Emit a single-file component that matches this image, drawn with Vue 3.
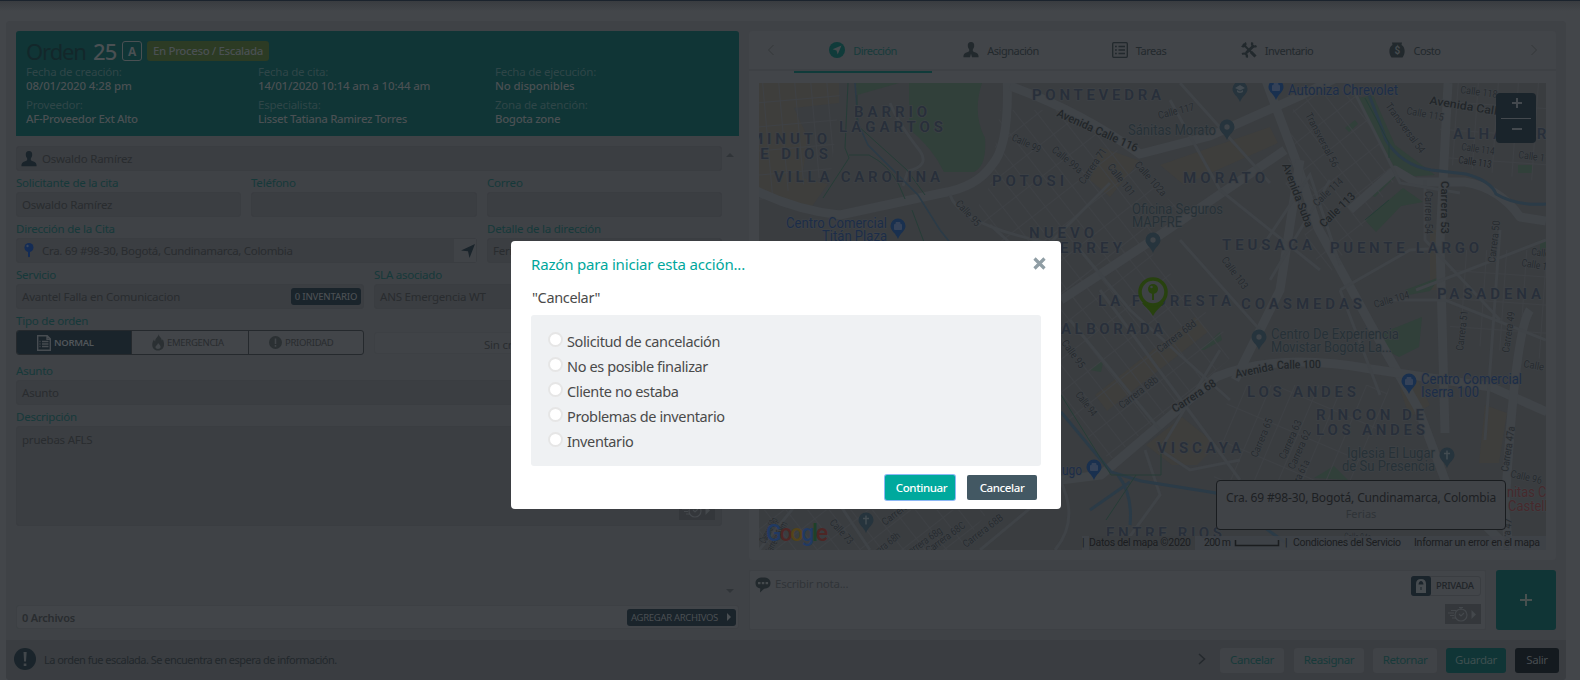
<script setup>
const columns = [
  [
    { label: 'Fecha de creación:', value: '08/01/2020 4:28 pm' },
    { label: 'Proveedor:', value: 'AF-Proveedor Ext Alto' },
  ],
  [
    { label: 'Fecha de cita:', value: '14/01/2020 10:14 am a 10:44 am' },
    { label: 'Especialista:', value: 'Lisset Tatiana Ramirez Torres' },
  ],
  [
    { label: 'Fecha de ejecución:', value: 'No disponibles' },
    { label: 'Zona de atención:', value: 'Bogota zone' },
  ],
]
const tabs = [
  { name: 'Dirección', icon: 'compass' },
  { name: 'Asignación', icon: 'user' },
  { name: 'Tareas', icon: 'list' },
  { name: 'Inventario', icon: 'tools' },
  { name: 'Costo', icon: 'cost' },
]
const reasons = [
  'Solicitud de cancelación',
  'No es posible finalizar',
  'Cliente no estaba',
  'Problemas de inventario',
  'Inventario',
]

// Neighbourhood names: text, start x, end x, baseline
const areas = [
  ['BARRIO', 854, 927, 117], ['LAGARTOS', 839, 943, 132], ['MINUTO', 750, 827, 144],
  ['DE DIOS', 746, 828, 159], ['VILLA CAROLINA', 774, 940, 182], ['PONTEVEDRA', 1032, 1161, 100],
  ['POTOSI', 992, 1064, 186], ['NUEVO', 1029, 1094, 238], ['MONTERREY', 1000, 1122, 253],
  ['LA FLORESTA', 1098, 1231, 306], ['MORATO', 1183, 1265, 183], ['TEUSACA', 1222, 1312, 250],
  ['PUENTE LARGO', 1330, 1479, 253], ['COASMEDAS', 1241, 1362, 309], ['PASADENA', 1437, 1541, 299],
  ['ALHAMBRA', 1453, 1560, 139], ['ALBORADA', 1061, 1163, 334], ['LOS ANDES', 1247, 1356, 397],
  ['RINCON DE', 1316, 1424, 420], ['LOS ANDES', 1316, 1425, 435], ['VISCAYA', 1157, 1241, 453],
  ['ENTRE RIOS', 1106, 1222, 538],
]
// Street names run between two points
const rawStreets = [
  ['Avenida Calle 116', 1056, 116, 1136, 152, 'big'], ['Calle 99', 1011, 140, 1039, 153],
  ['Calle 99a', 1051, 151, 1079, 174], ['Carrera 71', 1084, 185, 1107, 151],
  ['Calle 101', 1107, 167, 1130, 197], ['Calle 102a', 1134, 165, 1162, 197],
  ['Calle 95', 955, 204, 976, 227], ['Calle 117', 1159, 119, 1195, 110],
  ['Transversal 56', 1305, 115, 1333, 168], ['Avenida Suba', 1282, 165, 1306, 228, 'big'],
  ['Calle 114', 1317, 207, 1344, 182], ['Calle 113', 1324, 228, 1356, 197, 'big'],
  ['Calle 103', 1221, 260, 1243, 290], ['Calle 104', 1375, 308, 1410, 298],
  ['Calle 118', 1460, 93, 1497, 98], ['Avenida Calle 116', 1429, 104, 1527, 120, 'big'],
  ['Calle 115', 1406, 114, 1443, 121], ['Calle 114', 1461, 150, 1494, 155],
  ['Calle 113', 1458, 163, 1491, 168, 'dark'], ['Calle 116', 1518, 158, 1554, 163],
  ['Transversal 54', 1385, 106, 1420, 154], ['Carrera 53', 1441, 181, 1441, 234, 'big'],
  ['Carrera 54', 1425, 191, 1425, 234], ['Carrera 50', 1495, 263, 1500, 221],
  ['Calle 106', 1531, 255, 1565, 259], ['Calle 105', 1521, 266, 1556, 272],
  ['Carrera 68d', 1160, 353, 1197, 325], ['Calle 95', 1061, 343, 1080, 369],
  ['Avenida', 1236, 378, 1274, 370, 'big'], ['Calle 100', 1277, 369, 1321, 368, 'big'],
  ['Carrera 68', 1175, 413, 1217, 385, 'big'], ['Carrera 68b', 1122, 409, 1159, 381],
  ['Calle 94', 1075, 395, 1092, 417], ['Carrera 65', 1257, 458, 1273, 420],
  ['Carrera 63', 1285, 460, 1302, 422], ['Carrera 62', 1294, 470, 1311, 432],
  ['Carrera 61a', 1291, 500, 1310, 462], ['Carrera 51', 1463, 351, 1468, 311],
  ['Carrera 49', 1509, 353, 1515, 312], ['Calle 99', 1523, 367, 1556, 373],
  ['Carrera 47a', 1508, 472, 1515, 427], ['Calle 96', 1510, 477, 1541, 484],
  ['Carrera 47', 1508, 559, 1512, 519], ['Calle 73', 829, 523, 849, 545],
  ['Carrera 68', 885, 526, 919, 500], ['Carrera 68h', 868, 563, 901, 537],
  ['Carrera 68g', 907, 558, 943, 532], ['Carrera 68C', 929, 554, 966, 527],
  ['Carrera 68B', 966, 548, 1004, 519], ['Calle 94a', 1344, 540, 1371, 541],
  ['Carrera 69p', 765, 544, 778, 520], ['Carrera 69m', 770, 556, 788, 524],
]
const streets = rawStreets.map(([text, x1, y1, x2, y2, kind]) => ({
  text,
  kind,
  length: Math.hypot(x2 - x1, y2 - y1),
  transform: `translate(${x1} ${y1}) rotate(${(Math.atan2(y2 - y1, x2 - x1) * 180) / Math.PI})`,
}))
// Places: text, start x, end x, baseline, class
const places = [
  ['Centro Comercial', 786, 887, 228, 'shop'], ['Titán Plaza', 822, 887, 241, 'shop'],
  ['Sánitas Morato', 1128, 1216, 135, 'place'], ['Oficina Seguros', 1132, 1223, 214, 'place'],
  ['MAPFRE', 1132, 1182, 227, 'place'], ['Autoniza Chrevolet', 1288, 1398, 95, 'shop'],
  ['Centro De Experiencia', 1271, 1399, 339, 'place'], ['Movistar Bogotá La...', 1271, 1392, 352, 'place'],
  ['Centro Comercial', 1421, 1522, 384, 'shop'], ['Iserra 100', 1421, 1479, 397, 'shop'],
  ['Iglesia El Lugar', 1347, 1435, 458, 'place'], ['de Su Presencia', 1342, 1435, 471, 'place'],
  ['ugo', 1062, 1082, 475, 'shop'], ['nitas Colsa', 1507, 1570, 497, 'clinic'], ['Castellana', 1508, 1569, 511, 'clinic'],
]
const pins = [
  [898, 226, 'bag'], [1276, 87, 'bag'], [1409, 381, 'bag'], [1094, 467, 'bag'],
  [1227, 127, 'dot'], [1153, 240, 'dot'], [1259, 337, 'dot'], [1240, 89, 'cap'],
  [1447, 455, 'cross'], [866, 520, 'cross'],
]
</script>

<template>
  <div class="page">
    <main class="sheet">
      <div class="content">
        <section class="left">
          <header class="order">
            <div class="order-title">
              <span class="word">Orden</span><b class="number">25</b><span class="grade">A</span>
              <span class="status">En Proceso / Escalada</span>
            </div>
            <div class="facts">
              <div v-for="(col, i) in columns" :key="i">
                <p v-for="f in col" :key="f.label"><span>{{ f.label }}</span><b>{{ f.value }}</b></p>
              </div>
            </div>
          </header>

          <div class="form-wrap">
            <div class="form">
              <div class="field client">
                <svg width="16" height="16" viewBox="0 0 16 16"><path class="ink" d="M8 0c2.200 0 3.400 1.600 3.200 3.900-.1 1.700-.9 2.700-1.400 3.500v1.700c.6.900 3.200 1.500 4.500 2.400 1 .8 1.500 2.500 1.200 3.700H.5C.2 14 .7 12.300 1.700 11.500 3 10.600 5.600 10 6.200 9.100V7.400C5.700 6.600 4.900 5.600 4.800 3.900 4.600 1.600 5.800 0 8 0z" /></svg>
                <span>Oswaldo Ramírez</span>
              </div>
              <div class="row thirds">
                <div><label>Solicitante de la cita</label><div class="field">Oswaldo Ramírez</div></div>
                <div><label>Teléfono</label><div class="field"></div></div>
                <div><label>Correo</label><div class="field"></div></div>
              </div>
              <div class="row address">
                <div>
                  <label>Dirección de la Cita</label>
                  <div class="field pinned">
                    <svg width="10" height="15" viewBox="0 0 10 15"><circle cx="5" cy="4.500" r="4.500" fill="#142c55" /><path d="M4 8h2v5.500q-1 1.500-2 0z" fill="#142c55" /><circle cx="3.500" cy="3" r="1.200" fill="#36455c" /></svg>
                    <span>Cra. 69 #98-30, Bogotá, Cundinamarca, Colombia</span>
                    <i class="locate"><svg width="14" height="14" viewBox="0 0 14 14"><path class="ink" d="M14 0 8.500 14 7 7.300 0 6.500z" /></svg></i>
                  </div>
                </div>
                <div><label>Detalle de la dirección</label><div class="field">Ferias</div></div>
              </div>
              <div class="row halves">
                <div><label>Servicio</label><div class="field service"><span>Avantel Falla en Comunicacion</span><b>0 INVENTARIO</b></div></div>
                <div><label>SLA asociado</label><div class="field">ANS Emergencia WT</div></div>
              </div>
              <div class="row halves kind-row">
                <div>
                  <label>Tipo de orden</label>
                  <div class="kinds">
                    <div class="on">
                      <svg width="14" height="16" viewBox="0 0 14 16" fill="none" stroke="#474c51" stroke-width="1.400"><path d="M.7.7h9.500l3.100 3.200v11.400H.7zM10 .7v3.500h3.300M5 6.500h6.500M5 9h6.500M5 11.500h6.500M2.500 6.500h1M2.500 9h1M2.500 11.500h1" /></svg>NORMAL
                    </div>
                    <div>
                      <svg width="12" height="17" viewBox="0 0 12 17"><path class="gray" d="M6.500 0c.4 3 3.300 3.500 3.200 6.500 1-.3 1-1.200 1-1.600C13.500 10.500 12 16.500 6 16.500S-1.200 10 2 5.500c.2 1.300.7 1.700 1.200 1.900C3 3.500 6.500 3.500 6.500 0z" /><path d="M6 9c2 2 2.800 3 2.600 4.300-.3 2.200-4.900 2.200-5.200 0C3.200 12 5.500 11.500 6 9z" fill="#42464a" /></svg>EMERGENCIA
                    </div>
                    <div>
                      <svg width="13" height="13" viewBox="0 0 13 13"><circle class="gray" cx="6.500" cy="6.500" r="6.500" /><path d="M5.700 2.500h1.600V8H5.700zM5.700 9h1.600v1.700H5.700z" fill="#42464a" /></svg>PRIORIDAD
                    </div>
                  </div>
                </div>
                <div class="criteria">Sin criterios</div>
              </div>
              <div class="row subject"><div><label>Asunto</label><div class="field">Asunto</div></div></div>
              <div class="row">
                <div><label>Descripción</label><div class="field area">pruebas AFLS
                  <span class="timer"><svg width="30" height="16" viewBox="0 0 30 16" fill="none" stroke="#44484c" stroke-width="1.200"><circle cx="13" cy="9" r="6" /><path d="M11 1.500h4M13 2v2M11 8l2 2 3-3M3 4.500h5M0 7h6M2 9.500h4M4 12h4" /><path d="m23.500 4 4.500 4.500-4.500 4.500z" fill="#44484c" stroke="none" /></svg></span>
                </div></div>
              </div>
            </div>
            <div class="scroll"><i class="up"></i><i class="down"></i></div>
          </div>

          <div class="files"><b>0 Archivos</b><span>AGREGAR ARCHIVOS<i></i></span></div>
        </section>

        <section class="right">
          <div class="map-card">
            <nav class="tabs">
              <svg class="chev" width="8" height="12" viewBox="0 0 8 12"><path d="M6.500 1 1.500 6l5 5" /></svg>
              <div v-for="(t, i) in tabs" :key="t.name" class="tab" :class="{ active: i === 0 }">
                <svg width="16" height="16" viewBox="0 0 16 16">
                  <template v-if="t.icon === 'compass'"><circle cx="8" cy="8" r="8" fill="#103b3a" /><path d="m12.500 3.500-3.800 9-1.200-4-4-1.200z" fill="#444a4d" /></template>
                  <path v-else-if="t.icon === 'user'" class="dim" d="M8 0c2.200 0 3.400 1.600 3.200 3.900-.1 1.700-.9 2.700-1.400 3.500v1.700c.6.900 3.200 1.500 4.500 2.400 1 .8 1.500 2.500 1.200 3.700H9L8 11.500 7 15.200H.5C.2 14 .7 12.300 1.700 11.500 3 10.600 5.600 10 6.200 9.100V7.400C5.700 6.600 4.900 5.600 4.800 3.900 4.600 1.600 5.800 0 8 0z" />
                  <g v-else-if="t.icon === 'list'" fill="none" stroke="#22292d" stroke-width="1.300"><rect x=".7" y=".7" width="14.600" height="14.600" rx="1" /><path d="M6.500 4.500H13M6.500 8H13M6.500 11.500H13M3 4.500h1.800M3 8h1.800M3 11.500h1.800" /></g>
                  <g v-else-if="t.icon === 'tools'" fill="none" stroke="#22292d"><path d="m2 2 11.500 11.500" stroke-width="1.800" /><path d="m10 10 4.500 4.500M12.500 4 5.500 10.500" stroke-width="3" /><path d="M3.800.8c1.700 2-1 4.500-3 3M11.500.5c-1.500 2.500 1 5 4 3.500M5.500 15.500c1.500-2.500-1-5-4.500-3.500M6 10.200 3.500 12.500" stroke-width="2.200" /></g>
                  <template v-else><path class="dim" d="M3 .5h10L12.500 3c4 2 4 8.500 1 12.500H2.500C-.5 11.500-.5 5 3.500 3z" /><text x="8" y="12" class="dollar">$</text></template>
                </svg>
                <span>{{ t.name }}</span>
              </div>
              <svg class="chev" width="8" height="12" viewBox="0 0 8 12"><path d="m1.500 1 5 5-5 5" /></svg>
            </nav>

            <div class="map">
              <svg width="787" height="467" viewBox="759 83 787 467">
                <defs>
                  <pattern id="grid-a" width="26" height="17" patternUnits="userSpaceOnUse" patternTransform="rotate(52)"><path d="M0 0h26M0 0v17" class="lane" /></pattern>
                  <pattern id="grid-b" width="16" height="24" patternUnits="userSpaceOnUse" patternTransform="rotate(-5)"><path d="M0 0h16M0 0v24" class="lane" /></pattern>
                  <pattern id="grid-c" width="22" height="36" patternUnits="userSpaceOnUse" patternTransform="rotate(23)"><path d="M0 0h22M0 0v36" class="lane" /></pattern>
                  <pattern id="grid-d" width="20" height="28" patternUnits="userSpaceOnUse" patternTransform="rotate(4)"><path d="M0 0h20M0 0v28" class="lane" /></pattern>
                </defs>
                <rect x="759" y="83" width="787" height="467" fill="#3a3d40" />
                <g fill="#3e3e3c">
                  <path d="M759 83h80v20l-45 5 14 30-6 40 26 6-18 25-51-20zM1146 445l36-28 35 28-20 20-25 0zM1430 230h15v60h-15zM1400 390l15-15 15 30-20 12zM1485 405l22 8-8 50-20 0zM1095 395l100-78 14 14-102 80zM1100 147l40 14-30 36-20-17zM1160 165l110-38 8 16-72 32-22 10z" />
                </g>
                <g fill="#31403a">
                  <path d="M909 83h73q-10 30 3 55 2 28-11 34l-30 0q-12-25-35-43zM856 83h43l-42 12zM1358 98l15-3 22 50 40 30-35 2-18-32zM1365 193l25-22 5 6-20 20zM1365 220l38-32 20 14-22 4-25 26zM1405 290l35-13-10 14-22 4zM1382 333l40-16-3 30-20 10-15-8zM1518 165h14v8h-14zM1540 240h10v10h-10zM1314 478l20-12 14 14zM1200 350l20-18 2 8-18 10zM1090 370l14-12-3 14zM1345 128l10-8 3 4-9 8z" />
                </g>
                <path d="M1000 110h75l105 100-100 100-110-90 20-35z" fill="url(#grid-a)" />
                <path d="M759 83h82l-10 90-72 30z" fill="url(#grid-b)" />
                <path d="M1061 290 1140 240l100 110-130 110-49-50z" fill="url(#grid-a)" />
                <path d="M759 510h230l-30 40H759z" fill="url(#grid-a)" />
                <path d="M1295 90h60l40 90-70 100-40-90z" fill="url(#grid-a)" />
                <path d="M1440 83h106v100l-106-20zM1450 250h96v110l-96-20z" fill="url(#grid-d)" />
                <path d="M1230 385h160l-30 115h-150z" fill="url(#grid-c)" />
                <g class="road big-road">
                  <path d="M1007 75q3 70-15 90-15 22-50 28L840 215q-45-5-85-25" />
                  <path d="M1010 86q70 25 130 68l70-18 90-40 50-25M1265 78l30 80 23 70 60 110 40 70 30 80 70 70" />
                  <path d="M1061 300 1160 235l125-85M1061 480l40-5 115-98q60-25 155-8l120 18 56 25" />
                  <path d="M1350 210l45-40 20 12 50 0q35 6 55 35l26 4M1448 83l-8 160 5 190" />
                  <path d="M1300 160l-20 130-45 90M1530 310q-15 20-25 200l4 40" />
                </g>
                <g class="road">
                  <path d="M890 103q8 20 30 48 10 15-12 20l-5 15M950 195q10 30 100 48l60-60M990 225l45 40M1340 290l70-40 34-2M1340 290l40 105M1390 300h55l101 40M1425 180v60l75 80M1500 230l-15 210M1546 240l-130 50M759 550l45-55M840 505l30 45M980 550l90-75M1060 480q20 40-5 70M1120 550l40-55-15-45M1220 350l-60 100 30 20 50-10" />
                  <path d="M1170 100l50 90 100 80M1180 83l90 100M1350 83l50 100 60 10M1330 180l-60 100M1180 240l80 90M1260 250l50-75 30 90M1080 250l50 60 100 90M1070 320l90 110M1100 290l140 190" />
                </g>
                <path class="water thin" d="M855 83l3 40 10 22 50 50 22 35 20 25" />
                <path class="water" d="M1369 95q10 25 17 45 15 25 45 30l35 4q25 7 30 20 20 12 50 10M1061 412l50 60 30 9 75 12 70 50M1118 475q15 20 12 50M1130 482l-40 28" />
                <path class="trail" d="M848 83l-3 65 4 10-26 40M849 155h20q20 10 30 30l6 14M857 95v30l50 45 18 25M1061 395l50 80 50 0 0-30M1365 98l24 45v15M1365 220l24-20M912 210l15 40M1106 520l30-45" />

                <g class="names"><text v-for="(a, i) in areas" :key="i" :x="a[1]" :y="a[3]" :textLength="a[2] - a[1]">{{ a[0] }}</text></g>
                <g class="street"><text v-for="(s, i) in streets" :key="i" :class="s.kind" :transform="s.transform" :textLength="s.length" lengthAdjust="spacingAndGlyphs">{{ s.text }}</text></g>
                <text v-for="(p, i) in places" :key="i" :class="p[4]" :x="p[1]" :y="p[3]" :textLength="p[2] - p[1]" lengthAdjust="spacingAndGlyphs">{{ p[0] }}</text>
                <g v-for="(p, i) in pins" :key="'p' + i" :transform="`translate(${p[0]} ${p[1]})`">
                  <path d="M0 13C-2 7-7.500 5-7.500 0a7.500 7.500 0 0 1 15 0C7.500 5 2 7 0 13z" :fill="p[2] === 'bag' ? '#19304f' : '#26343d'" />
                  <circle v-if="p[2] === 'dot'" r="2.700" fill="#3f4449" />
                  <path v-else-if="p[2] === 'bag'" d="M-3.500-1.500h7v5h-7zM-2-1.500v-2h4v2" fill="#354258" stroke="#354258" />
                  <path v-else-if="p[2] === 'cap'" d="m-5-1 5-3 5 3-5 2.500zM-3 1v2q3 2 6 0V1L0 2.500z" fill="#424a50" />
                  <path v-else d="M0-4.500v9M-3-1.500h6" fill="none" stroke="#434c52" stroke-width="1.500" />
                </g>
                <path d="M1153 316c-3-6-8-9-11-13h22c-3 4-8 7-11 13z" fill="#28420f" />
                <circle cx="1153" cy="292" r="13" fill="#3e4245" stroke="#28420f" stroke-width="3.500" />
                <circle cx="1153" cy="289" r="5" fill="#28420f" /><path d="M1152 293h2v7h-2z" fill="#28420f" /><circle cx="1151.500" cy="287" r="1.300" fill="#3e4245" />
                <text class="google" x="766" y="541" textLength="62"><tspan fill="#213a63">G</tspan><tspan fill="#4d2625">o</tspan><tspan fill="#54441a">o</tspan><tspan fill="#213a63">g</tspan><tspan fill="#1e4129">l</tspan><tspan fill="#4d2625">e</tspan></text>
                <path d="M1082 536h464v14H1082z" fill="#404448" fill-opacity=".8" />
                <path d="M1089 536h106v14h-106z" fill="#393c3f" />
                <g class="legal">
                  <text x="1082" y="546">|</text><text x="1089" y="546" textLength="102">Datos del mapa ©2020</text><text x="1204" y="546" textLength="27">200 m</text>
                  <path d="M1235.500 540v5.500h43V540" fill="none" stroke="#1b1d1f" stroke-width="1.500" />
                  <text x="1285" y="546">|</text><text x="1293" y="546" textLength="108">Condiciones del Servicio</text><text x="1414" y="546" textLength="126">Informar un error en el mapa</text>
                </g>
              </svg>
              <div class="zoom"><svg width="40" height="50" viewBox="0 0 40 50" fill="none" stroke="#44494e" stroke-width="2"><path d="M16 10h10M21 5v10M16 36h10" /><path d="M5 25.500h30" stroke-width="1" /></svg></div>
              <div class="tip"><span>Cra. 69 #98-30, Bogotá, Cundinamarca, Colombia</span><small>Ferias</small></div>
            </div>
          </div>

          <div class="note-row">
            <div class="note">
              <svg width="16" height="16" viewBox="0 0 16 16"><path class="dim" d="M8 .5c5 0 7.500 2 7.500 5.500 0 3.800-2.500 5.500-6.500 5.800L5 15.500l.3-4C2 11 .5 9 .5 6 .5 2.500 3 .5 8 .5z" /><path d="M3 5h2.500v2.200H3zM6.800 5h2.500v2.200H6.800zM10.600 5h2.500v2.200h-2.500z" fill="#454a4d" /></svg>
              <span class="hint">Escribir nota...</span>
              <div class="tools">
                <div class="private"><i><svg width="12" height="14" viewBox="0 0 12 14"><path d="M1 14V5q0-5 5-5t5 5v9z" fill="#474c50" /><path d="M3.500 5.500h5Q8 2 6 2T3.500 5.500zM5.500 8h1v3h-1z" fill="#1b242b" /></svg></i><b>PRIVADA</b></div>
                <span class="timer"><svg width="30" height="16" viewBox="0 0 30 16" fill="none" stroke="#44484c" stroke-width="1.200"><circle cx="13" cy="9" r="6" /><path d="M11 1.500h4M13 2v2M11 8l2 2 3-3M3 4.500h5M0 7h6M2 9.500h4M4 12h4" /><path d="m23.500 4 4.500 4.500-4.500 4.500z" fill="#44484c" stroke="none" /></svg></span>
              </div>
            </div>
            <div class="add"><svg width="14" height="14" viewBox="0 0 14 14"><path d="M7 1v12M1 7h12" stroke="#47504f" stroke-width="2" /></svg></div>
          </div>
        </section>
      </div>

      <footer class="bar">
        <svg width="22" height="22" viewBox="0 0 22 22"><circle class="ink" cx="11" cy="11" r="11" /><path d="M9.500 4h3.200l-.7 9.500h-1.900zM9.700 15.500h2.700V18H9.700z" fill="#42474b" /></svg>
        <span class="message">La orden fue escalada. Se encuentra en espera de información.</span>
        <svg class="next" width="8" height="12" viewBox="0 0 8 12"><path d="m1 1 5.500 5L1 11" fill="none" stroke="#24292d" stroke-width="1.500" /></svg>
        <span class="act a1">Cancelar</span><span class="act a2">Reasignar</span><span class="act a3">Retornar</span>
        <span class="act save">Guardar</span><span class="act exit">Salir</span>
      </footer>
    </main>

    <div class="modal">
      <div class="modal-head"><h2>Razón para iniciar esta acción...</h2><svg width="13" height="13" viewBox="0 0 13 13"><path d="m1.500 1.500 10 10M11.500 1.500l-10 10" stroke="#8f9da4" stroke-width="3.200" /></svg></div>
      <p class="action">"Cancelar"</p>
      <div class="reasons"><label v-for="r in reasons" :key="r"><i></i><span>{{ r }}</span></label></div>
      <div class="modal-actions"><button class="go">Continuar</button><button>Cancelar</button></div>
    </div>
  </div>
</template>

<style>
body { margin: 0; overflow: hidden; }
</style>

<style scoped>
* { box-sizing: border-box; }
.page { position: relative; width: 1580px; height: 680px; padding: 21px 14px 0 6px; overflow: hidden; font-family: "Noto Sans", "Open Sans", sans-serif; font-size: 11.5px; letter-spacing: -.22px; color: #292c2f; background: linear-gradient(#1b232d 0 1px, #393c40 1px, #43464a 11px); }
.ink { fill: #1a242b; }
.dim { fill: #22292d; }
.gray { fill: #2b3033; }
.sheet { width: 1560px; height: 659px; border-radius: 4px; background: #3f4246; display: flex; flex-direction: column; overflow: hidden; }
.content { display: flex; gap: 10px; padding: 10px 10px 0; height: 619px; flex: none; }
.left { width: 723px; display: flex; flex-direction: column; }
.order { height: 105px; padding: 10px; background: #103536; border-radius: 3px 3px 0 0; color: #4a5053; }
.order-title { display: flex; align-items: center; height: 20px; }
.word { width: 67px; color: #13272a; font-size: 22px; line-height: 20px; letter-spacing: -1.1px; }
.number { width: 29px; font-size: 22px; font-weight: 500; letter-spacing: -.9px; }
.grade { width: 20px; height: 20px; border: 1px solid #4a5053; border-radius: 3px; font-weight: 700; text-align: center; line-height: 19px; font-size: 12px; }
.status { width: 122px; height: 20px; margin-left: 5px; border-radius: 3px; background: #2c3b24; text-align: center; line-height: 20px; font-weight: 500; white-space: nowrap; letter-spacing: -.4px; }
.facts { display: grid; grid-template-columns: 232px 237px 1fr; margin-top: 4px; }
.facts p { margin: 0 0 5px; height: 28px; }
.facts span, .facts b { display: block; height: 14px; line-height: 14px; white-space: nowrap; }
.facts span { color: #2f4648; }
.facts b { font-weight: 500; }
.facts p:first-child b { letter-spacing: -.15px; }
.facts p:last-child b { letter-spacing: -.35px; }
.form-wrap { height: 451px; margin-top: 10px; display: flex; gap: 4px; }
.form { width: 706px; }
.field { height: 25px; border: 1px solid #3a3d41; border-radius: 3px; background: #3b3e42; padding: 0 5px; line-height: 24px; white-space: nowrap; display: block; }
.client { display: flex; align-items: center; gap: 5px; padding-left: 4px; }
.row { display: grid; gap: 10px; height: 46px; }
.row label { display: block; height: 21px; line-height: 24px; color: #16393a; }
.thirds { grid-template-columns: 225px 226px 235px; }
.address { grid-template-columns: 461px 235px; }
.halves { grid-template-columns: 348px 348px; }
.pinned { display: flex; align-items: center; gap: 9px; padding-left: 7px; letter-spacing: -.32px; }
.pinned span { margin-left: -1px; }
.locate { width: 22px; height: 23px; margin: 0 -5px 0 auto; padding-left: 6px; display: flex; align-items: center; justify-content: center; background: #404347; }
.service { display: flex; align-items: center; justify-content: space-between; padding-right: 2px; }
.service b { width: 70px; height: 17px; line-height: 17px; border-radius: 3px; background: #1a242b; color: #4a4f53; text-align: center; font-size: 9.500px; font-weight: 500; letter-spacing: -.2px; }
.kinds { display: grid; grid-template-columns: 114px 117px 1fr; height: 25px; border: 1px solid #25292d; border-radius: 3px; background: #424549; overflow: hidden; font-size: 9.500px; line-height: 23px; letter-spacing: -.3px; }
.kinds div { display: flex; align-items: center; gap: 3px; padding-left: 20px; border-left: 1px solid #25292d; }
.kinds .on { background: #1a242b; color: #51565a; font-weight: 600; border: 0; }
.criteria { margin-top: 23px; height: 22px; line-height: 23px; padding-left: 109px; border: 1px solid #3d4044; border-radius: 3px; background: #404347; }
.subject { margin-top: 4px; }
.area { height: 100px; line-height: 26px; position: relative; }
.timer { display: flex; align-items: center; justify-content: center; width: 36px; height: 20px; background: #34373b; }
.area .timer { position: absolute; right: 6px; bottom: 5px; }
.scroll { width: 8px; display: flex; flex-direction: column; justify-content: space-between; padding: 7px 0 4px; }
.scroll i { border: 4px solid transparent; }
.up { border-top: 0 !important; border-bottom-color: #303438 !important; }
.down { border-bottom: 0 !important; border-top-color: #303438 !important; }
.files { height: 24px; margin-top: 8px; padding: 0 2px 0 5px; display: flex; align-items: center; justify-content: space-between; border: 1px solid #3d4044; border-radius: 3px; background: #424549; }
.files b { font-size: 11px; font-weight: 600; letter-spacing: -.2px; }
.files span { width: 109px; height: 17px; border-radius: 3px; background: #1a242b; color: #4a4f53; font-size: 9.500px; letter-spacing: -.3px; display: flex; align-items: center; justify-content: space-between; padding: 0 5px 0 4px; white-space: nowrap; }
.files i { border: 4px solid transparent; border-left-color: #4a4f53; border-right: 0; }
.right { width: 807px; }
.map-card { height: 529px; background: #424549; border-radius: 3px; }
.tabs { height: 40px; display: flex; align-items: center; padding: 0 18px; border-bottom: 2px solid #3e4145; color: #22292d; }
.tabs .chev { fill: none; stroke: #34383b; }
.tab { width: 138px; height: 40px; display: flex; align-items: center; justify-content: center; gap: 8px; font-size: 11px; letter-spacing: -.5px; white-space: nowrap; }
.tabs .chev:first-child { margin-right: 19px; }
.tabs .chev:last-child { margin-left: auto; }
.tab.active { color: #173b3b; border-bottom: 2px solid #103b3a; height: 42px; margin-top: 4px; padding-bottom: 2px; }
.dollar { fill: #464b4e; font: 700 10px Roboto, sans-serif; text-anchor: middle; }
.map { position: relative; width: 787px; height: 467px; margin: 12px 10px 0; overflow: hidden; letter-spacing: 0; }
.map svg { display: block; }
.lane { fill: none; stroke: #3e4145; stroke-width: 2; }
.road { fill: none; stroke: #3f4347; stroke-width: 3; }
.big-road { stroke: #404448; stroke-width: 9; stroke-linejoin: round; }
.water { fill: none; stroke: #2b3b47; stroke-width: 3; }
.water.thin { stroke-width: 1.500; }
.trail { fill: none; stroke: #263d37; stroke-width: 1; }
.map text { font-family: Roboto, sans-serif; paint-order: stroke; stroke: #3d4145; stroke-width: 1.500px; }
.names text { font-size: 15px; font-weight: 600; fill: #282f3a; }
.street text { font-size: 10.500px; fill: #272b2f; }
.street .big { font-size: 11.500px; font-weight: 500; fill: #222629; }
.street .dark { fill: #1f2327; }
.place, .shop, .clinic { font-size: 14px; }
.place { fill: #273137; }
.shop { fill: #1c2d48; }
.clinic { fill: #46292c; }
.map .google { font-size: 23px; font-weight: 500; stroke: none; }
.map .legal text { font-size: 10.500px; fill: #1b1d1f; stroke: none; }
.zoom { position: absolute; right: 10px; top: 10px; width: 40px; height: 50px; border-radius: 4px; background: #1a242b; }
.tip { position: absolute; left: 457px; top: 397px; width: 290px; height: 50px; border: 1px solid #191c1f; border-radius: 4px; background: #404347; text-align: center; padding-top: 9px; }
.tip span, .tip small { display: block; white-space: nowrap; line-height: 16px; }
.tip span { font-size: 12px; color: #1d2023; letter-spacing: -.15px; }
.tip small { font-size: 11px; color: #2f3337; }
.note-row { display: flex; justify-content: space-between; margin-top: 10px; }
.note { width: 737px; height: 60px; display: flex; padding: 6px 4px 0 5px; border: 1px solid #3d4044; background: #424549; border-radius: 2px; }
.hint { margin: -1px auto 0 4px; color: #303438; }
.tools { width: 70px; display: flex; flex-direction: column; align-items: flex-end; gap: 8px; margin-top: -1px; }
.private { width: 70px; height: 20px; display: flex; border: 1px solid #3a3d41; border-radius: 3px; }
.private i { width: 20px; height: 20px; margin: -1px 0 0 -1px; border-radius: 3px; background: #1a242b; display: flex; align-items: center; justify-content: center; }
.private b { font-size: 9.500px; font-weight: 500; line-height: 17px; margin-left: 5px; letter-spacing: -.3px; color: #202428; }
.add { width: 60px; height: 60px; border-radius: 3px; background: #103536; display: flex; align-items: center; justify-content: center; }
.bar { height: 40px; background: #3a3d41; display: flex; align-items: center; padding: 0 7px 0 8px; }
.bar > svg { margin-bottom: 2px; }
.message { margin: -1px auto 0 8px; font-size: 11px; color: #22282c; letter-spacing: -.52px; }
.bar .next { margin-right: 14px; }
.act { height: 25px; line-height: 24px; border-radius: 3px; background: #404347; color: #173a3a; text-align: center; white-space: nowrap; margin-right: 9px; letter-spacing: -.4px; }
.a1 { width: 64px; margin-right: 10px; }
.a2 { width: 70px; }
.a3 { width: 64px; }
.save { width: 60px; background: #103536; color: #3e4f50; }
.exit { width: 44px; margin-right: 0; background: #141a1f; color: #474c50; }
.modal { position: absolute; left: 511px; top: 241px; width: 550px; height: 268px; padding: 16px 20px 0; border-radius: 4px; background: #fff; color: #4a4a4a; }
.modal-head { display: flex; justify-content: space-between; height: 32px; }
h2 { margin: -2px 0 0; font-size: 15px; line-height: 18px; font-weight: 400; color: #00a79c; letter-spacing: -.18px; white-space: nowrap; }
.modal-head svg { margin-right: -5px; }
.action { margin: -1px 0 0 1px; height: 27px; line-height: 18px; font-size: 14.500px; letter-spacing: -.35px; }
.reasons { height: 151px; border-radius: 3px; background: #eff1f3; padding: 13px 17px; }
.reasons label { display: flex; height: 25px; font-size: 14.500px; line-height: 27px; white-space: nowrap; letter-spacing: -.38px; }
.reasons i { width: 15px; height: 15px; margin: 4px 4px 0 0; border: 2px solid #e6e6e6; border-radius: 50%; background: #fff; }
.modal-actions { display: flex; justify-content: flex-end; gap: 12px; padding: 9px 4px 0 0; }
button { width: 70px; height: 25px; border: 0; border-radius: 2px; background: #435863; color: #fff; font: 500 11.500px "Noto Sans", sans-serif; padding: 0 0 1px; letter-spacing: -.4px; }
.go { background: #00a99d; box-shadow: 0 0 0 1px #8cb8f5; padding-left: 3px; }
</style>
